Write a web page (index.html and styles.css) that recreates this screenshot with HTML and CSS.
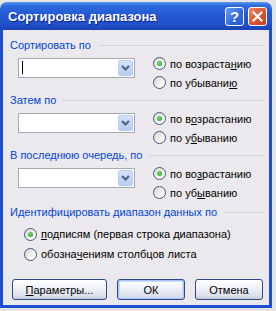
FILE: index.html
```html
<!DOCTYPE html>
<html lang="ru">

<head>
    <meta charset="UTF-8">
    <title>Сортировка диапазона</title>
    <link rel="stylesheet" href="styles.css">
</head>

<body>
    <div class="window">
        <div class="titlebar">
            <span class="title">Сортировка диапазона</span>
            <span class="tb help">?</span>
            <span class="tb close">
                <svg width="11" height="11" viewBox="0 0 11 11"><path d="M1.5 1.5 L9.5 9.5 M9.5 1.5 L1.5 9.5" stroke="#fff" stroke-width="2.2" stroke-linecap="square"/></svg>
            </span>
        </div>

        <div class="content">
            <div class="section-label"><span>Сортировать по</span><i class="rule"></i></div>
            <div class="sort-row">
                <div class="combo">
                    <div class="combo-field"><span class="caret"></span></div>
                    <div class="combo-btn"><svg width="9" height="6" viewBox="0 0 9 6"><path d="M1 1 L4.5 4.5 L8 1" fill="none" stroke="#4d6185" stroke-width="2"/></svg></div>
                </div>
                <div class="radios">
                    <div class="radio"><span class="dot checked"></span>по возраста<u>н</u>ию</div>
                    <div class="radio"><span class="dot"></span>по убывани<u>ю</u></div>
                </div>
            </div>

            <div class="section-label"><span>Затем по</span><i class="rule"></i></div>
            <div class="sort-row">
                <div class="combo">
                    <div class="combo-field"></div>
                    <div class="combo-btn"><svg width="9" height="6" viewBox="0 0 9 6"><path d="M1 1 L4.5 4.5 L8 1" fill="none" stroke="#4d6185" stroke-width="2"/></svg></div>
                </div>
                <div class="radios">
                    <div class="radio"><span class="dot checked"></span>по в<u>о</u>зрастанию</div>
                    <div class="radio"><span class="dot"></span>по у<u>б</u>ыванию</div>
                </div>
            </div>

            <div class="section-label"><span>В последнюю очередь, по</span><i class="rule"></i></div>
            <div class="sort-row">
                <div class="combo">
                    <div class="combo-field"></div>
                    <div class="combo-btn"><svg width="9" height="6" viewBox="0 0 9 6"><path d="M1 1 L4.5 4.5 L8 1" fill="none" stroke="#4d6185" stroke-width="2"/></svg></div>
                </div>
                <div class="radios">
                    <div class="radio"><span class="dot checked"></span>по во<u>з</u>растанию</div>
                    <div class="radio"><span class="dot"></span>по уб<u>ы</u>ванию</div>
                </div>
            </div>

            <div class="section-label last"><span>Идентифицировать диапазон данных по</span><i class="rule"></i></div>
            <div class="ident">
                <div class="radio"><span class="dot checked"></span><u>п</u>одписям (первая строка диапазона)</div>
                <div class="radio"><span class="dot"></span>обозна<u>ч</u>ениям столбцов листа</div>
            </div>

            <div class="actions">
                <button class="btn wide"><u>П</u>араметры...</button>
                <button class="btn default">ОК</button>
                <button class="btn">Отмена</button>
            </div>
        </div>
    </div>
</body>

</html>
```

FILE: styles.css
```css
body {
    margin: 0;
    background: #e4e4e4;
    font-family: "Liberation Sans", Arial, sans-serif;
    font-size: 11px;
    color: #000;
}

.window {
    width: 272px;
    height: 306px;
    margin-top: 2px;
    display: flex;
    flex-direction: column;
}

.titlebar {
    height: 28px;
    display: flex;
    align-items: center;
    padding: 0 5px 0 8px;
    border-radius: 7px 7px 0 0;
    background: linear-gradient(#5a9af2 0%, #2e6ce0 12%, #2459d4 45%, #1f50c9 80%, #1a42b6 100%);
}

.title {
    flex: 1;
    color: #fff;
    font-weight: bold;
    font-size: 13px;
    text-shadow: 1px 1px #0f2584;
}

.tb {
    width: 19px;
    height: 19px;
    box-sizing: border-box;
    border: 1px solid #fff;
    border-radius: 3px;
    display: flex;
    align-items: center;
    justify-content: center;
}

.help {
    margin-right: 4px;
    color: #fff;
    font-weight: bold;
    font-size: 15px;
    background: linear-gradient(135deg, #6aa0f2, #2f68dc 60%, #2a5ccf);
}

.close {
    background: linear-gradient(135deg, #ee8a65, #d9552e 55%, #c2401b);
}

.content {
    flex: 1;
    background: #ebe9ed;
    border: 3px solid #1d4fd4;
    border-top: 0;
    padding: 8px 4px 0 7px;
}

.section-label {
    display: flex;
    align-items: center;
    height: 14px;
    color: #0046d5;
}

.section-label.last {
    margin-top: 2px;
}

.rule {
    flex: 1;
    border-top: 1px solid #d3d1d9;
    margin-left: 7px;
}

.sort-row {
    display: flex;
    height: 39px;
    margin-top: 2px;
    padding-left: 8px;
}

.combo {
    width: 117px;
    height: 20px;
    margin-top: 4px;
    box-sizing: border-box;
    border: 1px solid #a5aab2;
    background: #fff;
    display: flex;
}

.combo-field {
    flex: 1;
    position: relative;
}

.caret {
    position: absolute;
    left: 3px;
    top: 2px;
    width: 1px;
    height: 13px;
    background: #000;
}

.combo-btn {
    width: 15px;
    margin: 1px;
    box-sizing: border-box;
    border: 1px solid #b9cdf1;
    border-radius: 2px;
    background: linear-gradient(#d6e2fa, #b7cbf1);
    display: flex;
    align-items: center;
    justify-content: center;
}

.radios {
    margin-left: 18px;
}

.radio {
    display: flex;
    align-items: center;
    height: 19px;
}

.dot {
    width: 13px;
    height: 13px;
    box-sizing: border-box;
    margin-right: 4px;
    border: 1px solid #3d5a80;
    border-radius: 50%;
    background: linear-gradient(135deg, #d8d6d0, #f4f4f0 60%, #fff);
    display: flex;
    align-items: center;
    justify-content: center;
}

.dot.checked::after {
    content: "";
    width: 5px;
    height: 5px;
    border-radius: 50%;
    background: radial-gradient(circle at 40% 40%, #74d874, #21a121);
}

.ident {
    margin-top: 5px;
    padding-left: 14px;
}

.ident .radio {
    height: 20px;
}

.actions {
    display: flex;
    gap: 10px;
    margin-top: 15px;
    padding-left: 2px;
}

.btn {
    width: 68px;
    height: 21px;
    padding: 0;
    font: inherit;
    color: #000;
    border: 1px solid #2b4c86;
    border-radius: 3px;
    background: linear-gradient(#ffffff, #f1f3f8 40%, #d9dfec 85%, #c5cddd);
}

.btn.wide {
    width: 95px;
}

.btn.default {
    box-shadow: inset 0 0 0 1px #a9c4f2, inset 0 0 0 2px #cfdcf6;
}
```
